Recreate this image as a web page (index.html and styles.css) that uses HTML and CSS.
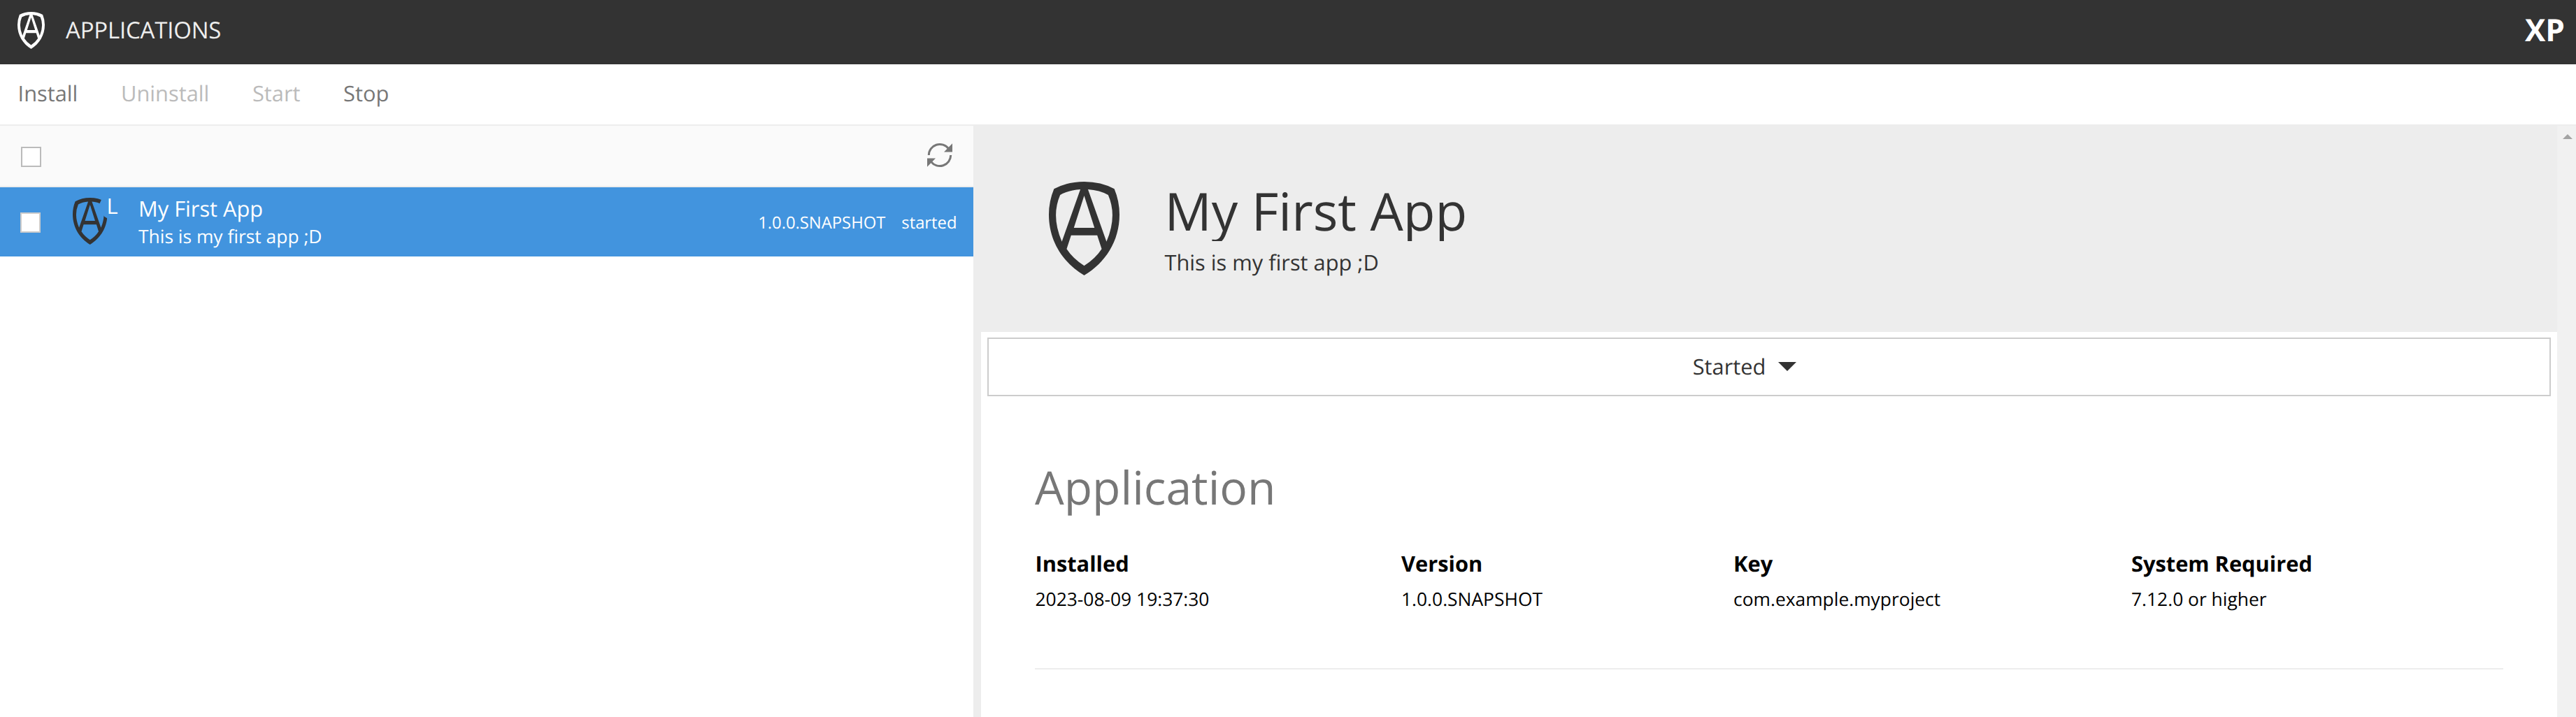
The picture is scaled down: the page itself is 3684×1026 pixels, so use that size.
FILE: index.html
```html
<!DOCTYPE html>
<html lang="en">
<head>
<meta charset="utf-8">
<title>Applications</title>
<link rel="stylesheet" href="styles.css">
</head>
<body>
<svg class="defs" aria-hidden="true">
  <symbol id="shield" viewBox="0 0 100 134" preserveAspectRatio="none">
    <path fill-rule="evenodd" d="M7.3 10.3Q26 0 50 0Q74 0 92.7 10.3Q100 28 100 47C100 85 80 116 50 134C20 116 0 85 0 47Q0 28 7.3 10.3ZM16 19Q28 12 44.6 11L18.4 85.7Q10 66 10 48Q10 33 16 19ZM84 19Q72 12 55.4 11L81.6 85.7Q90 66 90 48Q90 33 84 19ZM50 20L35.4 66H64.6ZM31.5 76.7H68.5L74.8 96.3Q66 110 50 120.3Q34 110 25.2 96.3Z"/>
  </symbol>
</svg>
<header class="app-bar">
  <svg class="app-bar-icon"><use href="#shield"/></svg>
  <span class="app-bar-title">APPLICATIONS</span>
  <span class="launcher">XP</span>
</header>
<nav class="toolbar">
  <span class="action">Install</span>
  <span class="action disabled">Uninstall</span>
  <span class="action disabled">Start</span>
  <span class="action">Stop</span>
</nav>
<div class="workspace">
  <section class="browse">
    <div class="grid-toolbar">
      <span class="checkbox"></span>
      <svg class="refresh" viewBox="0 0 36 36">
        <path class="arc" d="M2.3 18A15.7 15.7 0 0 1 30.5 8.6M33.7 18A15.7 15.7 0 0 1 5.5 27.4"/>
        <path d="M36 1.2V13.4H24ZM0 34.8V22.6H12Z"/>
      </svg>
    </div>
    <div class="grid-row">
      <span class="checkbox"></span>
      <div class="row-icon">
        <svg class="row-shield" viewBox="0 0 100 134" preserveAspectRatio="none"><use href="#shield" width="100" height="134"/><path class="notch" d="M82 -2L82.5 6L77.5 17L90 53L102 60H110V-2Z"/></svg>
        <span class="local-mark">L</span>
      </div>
      <div class="row-names">
        <div class="row-title">My First App</div>
        <div class="row-sub">This is my first app ;D</div>
      </div>
      <span class="row-version">1.0.0.SNAPSHOT</span>
      <span class="row-state">started</span>
    </div>
  </section>
  <section class="preview">
    <div class="preview-head">
      <svg class="preview-icon"><use href="#shield"/></svg>
      <div class="preview-names">
        <h1>My First App</h1>
        <p>This is my first app ;D</p>
      </div>
    </div>
    <div class="preview-body">
      <div class="state-menu"><span>Started</span><i class="caret"></i></div>
      <div class="details">
        <h2>Application</h2>
        <dl>
          <div><dt>Installed</dt><dd>2023-08-09 19:37:30</dd></div>
          <div><dt>Version</dt><dd>1.0.0.SNAPSHOT</dd></div>
          <div><dt>Key</dt><dd>com.example.myproject</dd></div>
          <div><dt>System Required</dt><dd>7.12.0 or higher</dd></div>
        </dl>
      </div>
    </div>
  </section>
  <div class="scrollbar"><i class="scroll-up"></i></div>
</div>
</body>
</html>
```

FILE: styles.css
```css
* { box-sizing: border-box; margin: 0; padding: 0; }
html, body { height: 100%; }
body {
  display: flex;
  flex-direction: column;
  overflow: hidden;
  background: #fff;
  color: #333;
  font: 30.8px/42px "Open Sans", sans-serif;
  text-rendering: geometricPrecision;
  white-space: nowrap;
}
svg { display: block; flex: none; }
.defs { position: absolute; width: 0; height: 0; }

.app-bar { display: flex; flex: none; height: 92px; padding: 0 16px 0 25px; background: #333; color: #fff; }
.app-bar-icon { width: 39px; height: 53px; margin-top: 17px; fill: #fff; }
.app-bar-title { margin: 22px 0 0 30px; font-size: 33px; letter-spacing: -0.2px; color: #eee; }
.launcher { margin: 12px 0 0 auto; font-size: 44px; line-height: 60px; font-weight: 700; }

.toolbar { display: flex; flex: none; gap: 61.6px; height: 88px; padding: 21px 25.6px 0; border-bottom: 2px solid #ededed; }
.action { color: #777; }
.disabled { color: #bbb; }

.workspace { display: flex; flex: 1; min-height: 0; }
.browse { flex: none; width: 1392px; }
.checkbox { flex: none; width: 29px; height: 29px; background: #fff; border: 2px solid #bbb; }
.grid-toolbar { display: flex; justify-content: space-between; height: 88px; padding: 30px 30px 0; background: #fafafa; border-bottom: 2px solid #ededed; }
.refresh { width: 36px; height: 36px; margin-top: -6px; fill: #777; }
.arc { fill: none; stroke: #777; stroke-width: 3; }
.grid-row { display: flex; height: 99px; padding: 0 23.5px 0 29px; background: #4294de; color: #fff; }
.grid-row .checkbox { margin-top: 36px; border-color: #ccc; }
.row-icon { display: flex; width: 94px; margin: 15px 0 0 46px; }
.row-shield { width: 49.5px; height: 67px; fill: #333; }
.notch { fill: #4294de; }
.local-mark { margin: -9px 0 0 -1px; }
.row-names { flex: 1; margin-top: 10px; }
.row-sub { font-size: 26.4px; line-height: 36px; }
.row-version, .row-state { font-size: 23.8px; line-height: 34px; margin-top: 33px; }
.row-state { margin-left: 23px; }

.preview { flex: 1; display: flex; flex-direction: column; }
.preview-head { display: flex; flex: none; height: 295px; padding: 80px 0 0 108px; background: #ededed; }
.preview-icon { width: 101px; height: 134px; fill: #333; }
.preview-names { margin: -3px 0 0 64.5px; }
h1 { height: 88px; overflow: hidden; font-size: 74.8px; line-height: 88px; font-weight: 400; }
.preview-names p { margin-top: 10px; }
.preview-body { flex: 1; padding: 8px 9px 0; border-left: 11px solid #ededed; }
.state-menu { display: flex; justify-content: center; align-items: center; gap: 18px; height: 84px; padding: 0 70px 1px 0; border: 2px solid #ccc; }
.caret { width: 0; height: 0; border: 13px solid transparent; border-top-color: #333; border-bottom: 0; }
.details { width: 2100px; height: 391px; margin: 0 0 0 68px; padding-top: 85px; border-bottom: 2px solid #ededed; }
h2 { color: #777; font-size: 66px; line-height: 90px; font-weight: 400; }
dl { display: grid; grid-template-columns: 523.5px 475px 569px 1fr; margin: 44px 0 0 0.5px; color: #000; }
dt { font-weight: 700; }
dd { margin-top: 11px; font-size: 26.4px; line-height: 36px; }

.scrollbar { flex: none; width: 27px; padding: 12px 0 0 8px; background: #f1f1f1; }
.scroll-up { display: block; width: 14px; height: 7px; background: #a3a3a3; clip-path: polygon(50% 0, 100% 100%, 0 100%); }
```
